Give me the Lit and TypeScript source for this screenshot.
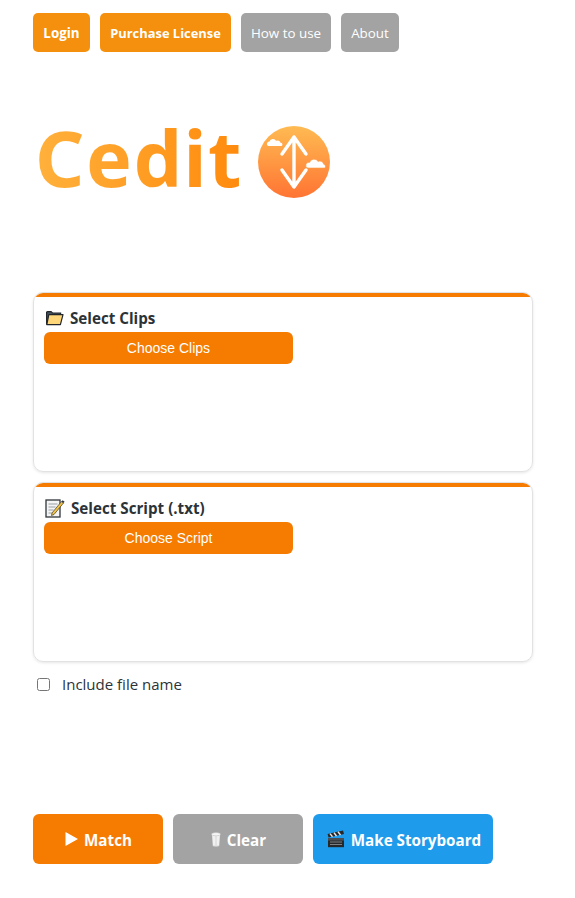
import { LitElement, html, css, svg } from "lit";
import { customElement } from "lit/decorators.js";

const folder = svg`<svg class="emoji" viewBox="0 0 19 16" width="19" height="16"><path d="M1.6 14.5 L1.6 2.6 Q1.6 1.6 2.6 1.6 L6 1.6 L7.5 3 L15.6 3 L15.6 6" fill="#46525c" stroke="#20262b" stroke-width="1.2"/><path d="M1.8 14.6 L3.8 4.6 L18 4.6 L15.4 14.6 Z" fill="#fed67a" stroke="#20262b" stroke-width="1.2" stroke-linejoin="round"/></svg>`;
const memo = svg`<svg class="emoji" viewBox="0 0 20 20" width="20" height="20"><rect x="1" y="2" width="14" height="17" fill="#f4f4f4" stroke="#30363a" stroke-width="1.3"/><path d="M3.5 6h9M3.5 9h7M3.5 12h5M3.5 15h4" stroke="#9aa0a5" stroke-width="1.2"/><path d="M7 15 L16.5 3.5 L18.5 5 L9 16.5 L6.5 17.5Z" fill="#f5c33b" stroke="#3a3a3a" stroke-width=".7"/><path d="M16.5 3.5 L17.6 2.2 L19.6 3.8 L18.5 5Z" fill="#30363a"/></svg>`;
const play = svg`<svg class="ic" viewBox="0 0 14 14" width="14" height="14"><path d="M1.5 0 L14 7 L1.5 14Z" fill="#fff"/></svg>`;
const bin = svg`<svg class="ic" viewBox="0 0 10 15" width="10" height="15"><path d="M.8 2.5 L1.8 14 Q5 15 8.2 14 L9.2 2.5Z" fill="#e3e3e3"/><path d="M3 4v9M7 4v9" stroke="#fff" stroke-width="1"/><ellipse cx="5" cy="2.2" rx="4.4" ry="1.6" fill="#f6f6f6" stroke="#bdbdbd" stroke-width=".5"/></svg>`;
const clapper = svg`<svg class="ic" viewBox="0 0 18 18" width="18" height="18"><path d="M1 8h16v9.2H1z" fill="#26282a"/><path d="M1 8h16v2.6H1z" fill="#4a4d50"/><path d="M3 12h12M3 14.5h12" stroke="#7d8184" stroke-width="1"/><path d="M.6 4 L16 .6 L17 4 L1.5 7.6Z" fill="#26282a"/><path d="M3 3.6 L5.5 6.8M7 2.8 L9.5 6M11 1.8 L13.5 5" stroke="#e8e8e8" stroke-width="1.4"/></svg>`;
const logo = svg`<svg class="logo-icon" viewBox="0 0 72 72" width="72" height="72"><defs><linearGradient id="lg" x1="0" y1="0" x2="0" y2="1"><stop offset="0" stop-color="#ffbb52"/><stop offset="1" stop-color="#ff7433"/></linearGradient></defs><circle cx="36" cy="36" r="36" fill="url(#lg)"/><path d="M36 11 V61 M24 28 L36 11 L48 28 M24 44 L36 61 L48 44" fill="none" stroke="#fff" stroke-width="3.4" stroke-linecap="round" stroke-linejoin="round"/><path d="M10 20 a2.4 2.4 0 0 1 1.5-4.4 a3.6 3.6 0 0 1 6.6-.8 a3 3 0 0 1 4.4 2 a1.7 1.7 0 0 1 1 3.2Z" fill="#fff"/><path d="M49.5 42 a3 3 0 0 1 2-5.6 a4.8 4.8 0 0 1 8.6-1 a4 4 0 0 1 5.6 2.8 a2.3 2.3 0 0 1 1.2 3.8Z" fill="#fff" stroke="#ff9a45" stroke-width=".6"/></svg>`;

@customElement("app-root")
export class AppRoot extends LitElement {
  static styles = css`
    :host {
      display: block;
      width: 575px;
      height: 898px;
      box-sizing: border-box;
      padding: 13px 33px 0;
      background: #fff;
      font-family: "Open Sans", "Noto Sans", sans-serif;
      color: #2c3338;
      overflow: hidden;
    }
    .nav { display: flex; gap: 10px; }
    .nav-btn {
      height: 39px;
      display: flex;
      align-items: center;
      justify-content: center;
      border-radius: 5px;
      color: #fff;
      font-size: 13.4px;
    }
    .orange { background: #f5900e; font-weight: 700; font-size: 12.9px; }
    .grey { background: #a3a3a3; }
    .w57 { width: 57px; font-size: 13.4px; }
    .w131 { width: 131px; }
    .w90 { width: 90px; }
    .w58 { width: 58px; }
    .brand {
      display: flex;
      align-items: center;
      gap: 15px;
      margin: 74px 0 0 2px;
      height: 72px;
    }
    .word {
      font-family: "Noto Sans", sans-serif;
      font-size: 77px;
      font-weight: 700;
      letter-spacing: 1.5px;
      line-height: 72px;
      padding-bottom: 8px;
      background: linear-gradient(90deg, #ffb13c, #ff8a0c);
      -webkit-background-clip: text;
      background-clip: text;
      color: transparent;
    }
    .logo-icon { display: block; }
    .cards { display: flex; flex-direction: column; gap: 10px; margin-top: 94px; }
    .card {
      width: 500px;
      height: 180px;
      box-sizing: border-box;
      border: 1px solid #e2e2e2;
      border-radius: 10px;
      box-shadow: 0 1px 3px rgba(0, 0, 0, 0.1);
      overflow: hidden;
    }
    .bar { height: 4px; background: #f57c00; }
    .body { padding: 10px 10px; }
    .title {
      display: flex;
      align-items: center;
      gap: 6px;
      height: 22px;
      margin-left: 1px;
      font-size: 15.2px;
      font-weight: 700;
      color: #2c3338;
    }
    .emoji, .ic { display: block; flex: none; }
    .choose {
      width: 249px;
      height: 32px;
      margin-top: 3px;
      display: flex;
      align-items: center;
      justify-content: center;
      background: #f57c00;
      border-radius: 6px;
      color: #fff;
      font: 14px "Liberation Sans", Arial, sans-serif;
    }
    .check { display: flex; align-items: center; margin: 15px 0 0 4px; height: 15px; font-size: 15px; }
    .check input { width: 13px; height: 13px; margin: 0 12px 0 0; }
    .check span { padding-bottom: 2px; }
    .actions { display: flex; gap: 10px; margin-top: 122px; }
    .act {
      height: 50px;
      box-sizing: border-box;
      display: flex;
      align-items: center;
      justify-content: center;
      gap: 6px;
      border-radius: 6px;
      color: #fff;
      font-size: 15.2px;
      font-weight: 700;
    }
    .act span { padding-top: 2px; }
    .match { width: 130px; background: #f57c00; }
    .clear { width: 130px; background: #a3a3a3; padding-left: 1px; }
    .story { width: 180px; background: #1e9bea; padding-left: 2px; }
  `;

  render() {
    return html`
      <div class="nav">
        <div class="nav-btn orange w57">Login</div>
        <div class="nav-btn orange w131">Purchase License</div>
        <div class="nav-btn grey w90">How to use</div>
        <div class="nav-btn grey w58">About</div>
      </div>
      <div class="brand"><span class="word">Cedit</span>${logo}</div>
      <div class="cards">
        <div class="card">
          <div class="bar"></div>
          <div class="body">
            <div class="title">${folder}<span>Select Clips</span></div>
            <div class="choose">Choose Clips</div>
          </div>
        </div>
        <div class="card">
          <div class="bar"></div>
          <div class="body">
            <div class="title">${memo}<span>Select Script (.txt)</span></div>
            <div class="choose">Choose Script</div>
          </div>
        </div>
      </div>
      <label class="check"><input type="checkbox" /><span>Include file name</span></label>
      <div class="actions">
        <div class="act match">${play}<span>Match</span></div>
        <div class="act clear">${bin}<span>Clear</span></div>
        <div class="act story">${clapper}<span>Make Storyboard</span></div>
      </div>
    `;
  }
}
